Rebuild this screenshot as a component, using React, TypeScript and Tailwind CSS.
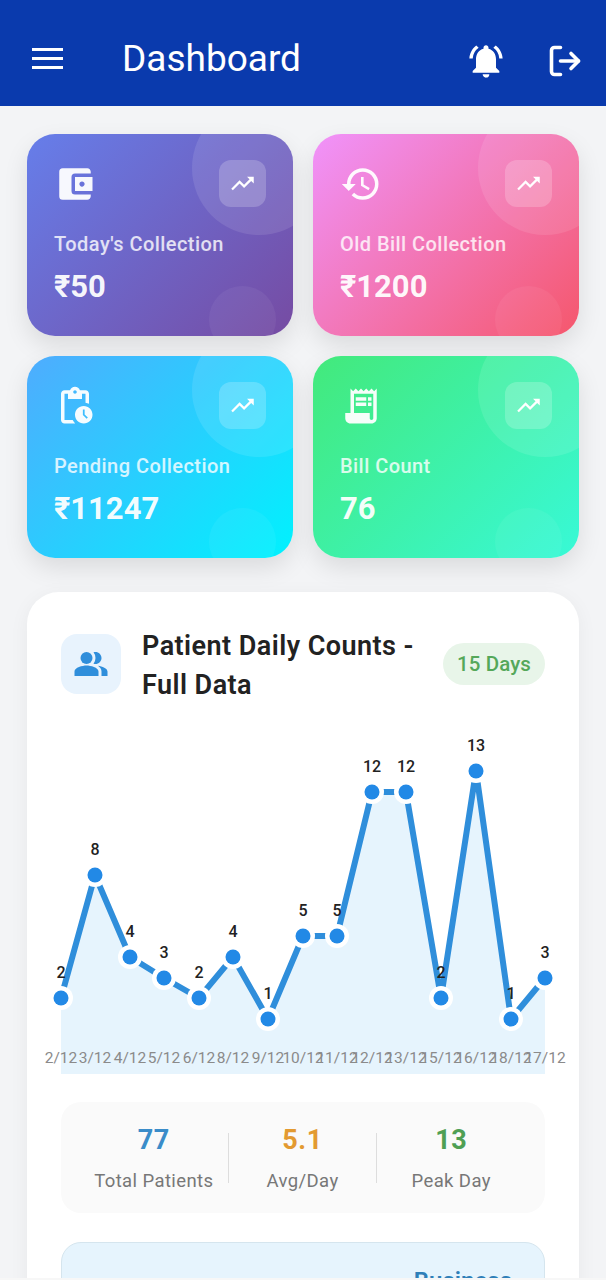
import React from 'react';
import { LogOut } from 'lucide-react';
import {
  MdAccountBalanceWallet,
  MdHistory,
  MdNotificationsActive,
  MdPendingActions,
  MdPeopleAlt,
  MdReceiptLong,
  MdTrendingUp,
} from 'react-icons/md';

const cards = [
  { label: "Today's Collection", value: '₹50', Icon: MdAccountBalanceWallet, bg: 'bg-[linear-gradient(135deg,#667eea,#764ba2)]' },
  { label: 'Old Bill Collection', value: '₹1200', Icon: MdHistory, bg: 'bg-[linear-gradient(135deg,#f093fb,#f5576c)]' },
  { label: 'Pending Collection', value: '₹11247', Icon: MdPendingActions, bg: 'bg-[linear-gradient(135deg,#4facfe,#00f2fe)]' },
  { label: 'Bill Count', value: '76', Icon: MdReceiptLong, bg: 'bg-[linear-gradient(135deg,#43e97b,#38f9d7)]' },
];

const points = [
  { x: 61, y: 998, count: 2, date: '2/12' },
  { x: 95, y: 875, count: 8, date: '3/12' },
  { x: 130, y: 957, count: 4, date: '4/12' },
  { x: 164, y: 978, count: 3, date: '5/12' },
  { x: 199, y: 998, count: 2, date: '6/12' },
  { x: 233, y: 957, count: 4, date: '8/12' },
  { x: 268, y: 1019, count: 1, date: '9/12' },
  { x: 303, y: 936, count: 5, date: '10/12' },
  { x: 337, y: 936, count: 5, date: '11/12' },
  { x: 372, y: 792, count: 12, date: '12/12' },
  { x: 406, y: 792, count: 12, date: '13/12' },
  { x: 441, y: 998, count: 2, date: '15/12' },
  { x: 476, y: 771, count: 13, date: '16/12' },
  { x: 511, y: 1019, count: 1, date: '18/12' },
  { x: 545, y: 978, count: 3, date: '17/12' },
];

const stats = [
  { value: '77', label: 'Total Patients', color: 'text-[#3a8cc9]' },
  { value: '5.1', label: 'Avg/Day', color: 'text-[#e39a31]' },
  { value: '13', label: 'Peak Day', color: 'text-[#4f9f54]' },
];

const line = points.map(p => `${p.x},${p.y}`).join(' ');

const StatCard = ({ label, value, Icon, bg }: (typeof cards)[number]) => (
  <div className={`relative overflow-hidden rounded-[28px] shadow-[0_10px_24px_rgba(0,0,0,0.1)] ${bg}`}>
    <div className="absolute -top-[33px] -right-[33px] h-[134px] w-[134px] rounded-full bg-white/10" />
    <div className="absolute right-[17px] -bottom-[17px] h-[67px] w-[67px] rounded-full bg-white/5" />
    <div className="relative flex items-center justify-between px-[27px] pt-[26px]">
      <Icon size={42} className="text-white/95" />
      <div className="flex h-[47px] w-[47px] items-center justify-center rounded-xl bg-white/20">
        <MdTrendingUp size={27} className="text-white" />
      </div>
    </div>
    <div className="relative mt-[26px] px-[27px] text-[20px] leading-[23px] font-medium tracking-[0.45px] text-white/80">{label}</div>
    <div className="relative mt-[13px] px-[27px] text-[31px] leading-9 font-bold text-white/95">{value}</div>
  </div>
);

const Chart = () => (
  <svg viewBox="27 730 552 350" className="mt-[27px] -ml-[34px] block h-[350px] w-[552px] max-w-none">
    <polygon points={`61,1074 ${line} 545,1074`} fill="#e6f4fd" />
    <polyline points={line} fill="none" stroke="#2f8edb" strokeWidth={6} />
    {points.map(p => (
      <g key={p.date}>
        <circle cx={p.x} cy={p.y} r={12} fill="#fff" />
        <circle cx={p.x} cy={p.y} r={7.5} fill="#2289e6" />
      </g>
    ))}
    {points.map(p => (
      <text key={p.date} x={p.x} y={p.y - 20} textAnchor="middle" fontSize={16} fontWeight={500} fill="#222">
        {p.count}
      </text>
    ))}
    {points.map(p => (
      <text key={p.date} x={p.x} y={1063} textAnchor="middle" fontSize={15.5} fill="#8a8a8a">
        {p.date}
      </text>
    ))}
  </svg>
);

const App: React.FC = () => {
  return (
    <div className="flex h-[1280px] flex-col overflow-hidden bg-[#f3f4f6] font-['Roboto',sans-serif]">
      <header className="flex h-[106px] shrink-0 items-center bg-[#0a3aad] pt-[10px] pr-[24px] pl-[32px] text-white">
        <div className="flex w-[31px] flex-col gap-[6px]">
          <span className="h-[3px] bg-white" />
          <span className="h-[3px] bg-white" />
          <span className="h-[3px] bg-white" />
        </div>
        <h1 className="ml-[59px] flex-1 text-[37px] leading-none font-normal">Dashboard</h1>
        <MdNotificationsActive size={40} className="mt-[6px] mr-[-3px]" />
        <LogOut size={36} strokeWidth={2.4} className="mt-[6px] ml-[44px] mr-[-1px]" />
      </header>

      <main className="flex-1 overflow-hidden px-[27px] pt-[28px]">
        <div className="grid auto-rows-[201.5px] grid-cols-2 gap-x-5 gap-y-[20.5px]">
          {cards.map(card => (
            <StatCard key={card.label} {...card} />
          ))}
        </div>

        <section className="mt-[34.5px] rounded-[32px] bg-white px-[34px] pt-[33px] pb-10 shadow-[0_4px_20px_rgba(0,0,0,0.05)]">
          <div className="flex items-center">
            <div className="flex h-[60px] w-[60px] shrink-0 items-center justify-center rounded-2xl bg-[#e8f3fd]">
              <MdPeopleAlt size={36} className="text-[#2f8edb]" />
            </div>
            <h2 className="ml-[21px] h-[78px] w-[290px] pt-[2px] text-[27px] leading-[39px] font-semibold tracking-[0.45px] text-[#222]">
              Patient Daily Counts - Full Data
            </h2>
            <span className="ml-auto flex h-[42px] items-center rounded-full bg-[#e8f5e9] px-[14px] text-[20.5px] font-medium tracking-[0.1px] text-[#55a85a]">
              15 Days
            </span>
          </div>

          <Chart />

          <div className="mt-[22px] flex h-[111px] items-center rounded-[20px] bg-[#fafafa] pr-[20px] pl-[19px]">
            {stats.map((stat, i) => (
              <React.Fragment key={stat.label}>
                {i > 0 && <div className="h-[50px] w-px bg-[#dddddd]" />}
                <div className="flex flex-1 flex-col items-center gap-[14px] pt-[3px]">
                  <span className={`text-[27px] leading-[30px] font-bold tracking-[0.5px] ${stat.color}`}>{stat.value}</span>
                  <span className="text-[18.5px] leading-[24px] tracking-[0.4px] text-[#777]">{stat.label}</span>
                </div>
              </React.Fragment>
            ))}
          </div>

          <div className="mt-[29px] h-[120px] rounded-[20px] border border-[#d5e5ee] bg-[#e6f4fd] pt-[20px] pr-[32px] text-right text-[24px] font-semibold text-[#2f7fb8]">
            Business
          </div>
        </section>
      </main>
      <div className="h-[2px] shrink-0 bg-[#f7f7f7]" />
    </div>
  );
};

export default App;
